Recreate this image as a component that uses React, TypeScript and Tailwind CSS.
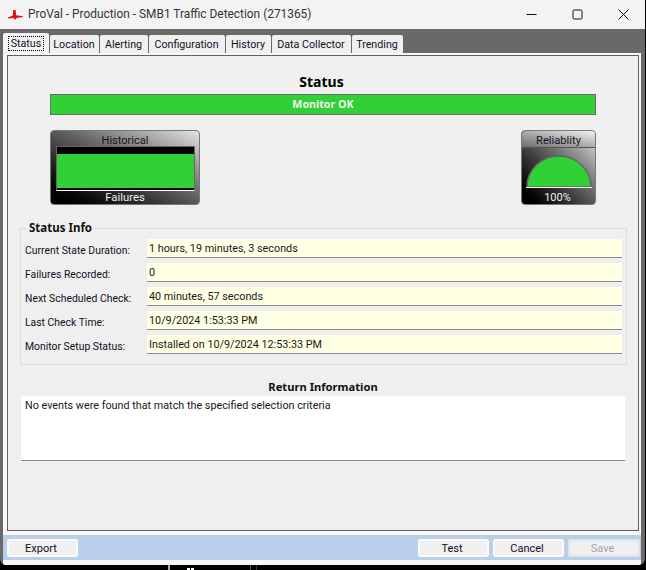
import React from 'react';

const tabs = [
  { label: 'Location', width: 'w-[49px]' },
  { label: 'Alerting', width: 'w-[48px]' },
  { label: 'Configuration', width: 'w-[76px]' },
  { label: 'History', width: 'w-[45px]' },
  { label: 'Data Collector', width: 'w-[79px]' },
  { label: 'Trending', width: 'w-[51px]' },
];

const statusRows = [
  { label: 'Current State Duration:', value: '1 hours, 19 minutes, 3 seconds' },
  { label: 'Failures Recorded:', value: '0' },
  { label: 'Next Scheduled Check:', value: '40 minutes, 57 seconds' },
  { label: 'Last Check Time:', value: '10/9/2024 1:53:33 PM' },
  { label: 'Monitor Setup Status:', value: 'Installed on 10/9/2024 12:53:33 PM' },
];

const Logo = () => (
  <svg width="15" height="10" viewBox="0 0 15 10" className="shrink-0">
    <path d="M5.2 0 L7.6 0 L8.2 5.2 L15 6.2 L15 7 L8.6 8 L7 10 L5.6 8 L0 8.4 L0 7.6 L4.8 5.4 Z" fill="#d9141c" />
  </svg>
);

const DialogButton = ({ label, disabled, width }: { label: string; disabled?: boolean; width: string }) => (
  <button
    disabled={disabled}
    className={`${width} h-[18px] pt-[1px] pr-[3px] rounded-[3px] bg-[#f0f0f0] border-2 text-[11px] leading-none ${disabled ? 'text-[#a3a3a3] border-[#dfe6ee]' : 'text-[#10101e] border-[#fbfbfb]'}`}
  >
    {label}
  </button>
);

export default function App() {
  return (
    <div className="w-[646px] h-[570px] bg-black overflow-hidden font-['Roboto',sans-serif] text-[#10101e]">
      <div className="w-[645px] h-[565px] bg-[#696969] rounded-b-[6px] flex flex-col">
        {/* title bar */}
        <div className="h-[29px] bg-[#f3f3f3] flex items-center pl-[8px]">
          <Logo />
          <span className="ml-[5px] text-[11.9px] text-[#333]">ProVal - Production - SMB1 Traffic Detection (271365)</span>
          <div className="ml-auto flex items-center gap-[35px] pr-[16px]">
            <svg width="11" height="11" viewBox="0 0 11 11"><path d="M0.5 5.5 H10.5" stroke="#111" strokeWidth="1" /></svg>
            <svg width="11" height="11" viewBox="0 0 11 11"><rect x="1" y="1" width="9" height="9" rx="1.2" fill="none" stroke="#111" strokeWidth="1" /></svg>
            <svg width="11" height="11" viewBox="0 0 11 11"><path d="M0.5 0.5 L10.5 10.5 M10.5 0.5 L0.5 10.5" stroke="#111" strokeWidth="1" /></svg>
          </div>
        </div>

        {/* tabs */}
        <div className="h-[24px] pl-[3px] flex items-end text-[10.7px]">
          <div className="w-[46px] h-[20px] bg-[#f4f4f4] rounded-t-[2px] flex items-center justify-center">
            <span className="border border-dotted border-black h-[15px] px-[2px] leading-[13px]">Status</span>
          </div>
          <div className="flex ml-[1px] gap-[1px]">
            {tabs.map((tab) => (
              <div key={tab.label} className={`${tab.width} h-[18px] pt-[2px] pr-[1px] bg-[#f0f0f0] rounded-t-[2px] flex items-center justify-center leading-none`}>
                {tab.label}
              </div>
            ))}
          </div>
        </div>

        {/* body */}
        <div className="flex-1 mx-[3px] bg-[#f8f8f8] rounded-b-[2px] flex flex-col min-h-0 w-[638px]">
          <div className="h-[476px] mt-[2px] ml-[4px] mr-[2px] border border-[#5f5f5f] bg-[#efefef] flex flex-col">
            <h1 className="mt-[17px] h-[17px] pr-[3px] text-center font-['Noto_Sans',sans-serif] text-[14px] leading-[17px] font-bold text-black">Status</h1>
            <div className="mt-[4px] mx-[42px] h-[21px] bg-[#2fd135] border border-[#6b6b6b] flex items-center justify-center font-['Noto_Sans',sans-serif] text-[10.7px] font-bold text-[#f2f2f2]">
              Monitor OK
            </div>

            <div className="mt-[15px] mx-[42px] h-[75px] flex justify-between">
              <div className="w-[150px] h-[75px] rounded-[4px] border border-[#777] bg-linear-to-bl from-[#e4e4e4] to-black flex flex-col items-center">
                <div className="h-[15px] text-[11px] leading-[19px] text-[#14141e]">Historical</div>
                <div className="w-[139px] h-[45px] border border-[#666] border-b-[#fff] bg-black pt-[7px] pb-[2px]">
                  <div className="h-full bg-[#2fd135]" />
                </div>
                <div className="h-[13px] text-[11.3px] leading-[13px] text-[#f0f0f0]">Failures</div>
              </div>
              <div className="w-[75px] h-[75px] rounded-[4px] border border-[#777] bg-linear-to-bl from-[#e4e4e4] to-black flex flex-col items-center">
                <div className="w-full h-[17px] border-b border-[#555] text-[11.2px] leading-[19px] text-center text-[#14141e] rounded-t-[4px] bg-linear-to-bl from-[#f2f2f2] to-[#6c6c6c]">Reliablity</div>
                <svg width="66" height="33" viewBox="0 0 66 33" className="mt-[7px] shrink-0">
                  <path d="M1 32 A32 31 0 0 1 65 32 Z" fill="#2fd135" stroke="#666" strokeWidth="1.5" />
                  <path d="M0 32.5 H66" stroke="#fff" strokeWidth="1" />
                </svg>
                <div className="mt-[3px] pr-[2px] h-[13px] text-[11px] leading-[13px] text-[#f0f0f0]">100%</div>
              </div>
            </div>

            {/* status info */}
            <div className="relative mt-[23px] ml-[12px] w-[607px] h-[137px] border border-[#dcdcdc] pt-[10px] pl-[4px] flex flex-col gap-[5px]">
              <span className="absolute left-[6px] -top-[9px] px-[2px] bg-[#efefef] font-['Noto_Sans',sans-serif] text-[11.5px] leading-[15px] font-bold text-[#111]">Status Info</span>
              {statusRows.map((row) => (
                <div key={row.label} className="flex h-[19px]">
                  <div className="w-[122px] pt-[5px] text-[10.4px] leading-[14px] whitespace-nowrap">{row.label}</div>
                  <div className="w-[475px] bg-[#ffffe4] border-b border-[#8a8a8a] pl-[2px] text-[10.8px] leading-[19px] whitespace-nowrap text-[#181818]">{row.value}</div>
                </div>
              ))}
            </div>

            {/* return info */}
            <div className="mt-[14px] h-[16px] text-center font-['Noto_Sans',sans-serif] text-[11.2px] leading-[16px] font-bold text-[#111]">Return Information</div>
            <div className="mt-[1px] ml-[13px] w-[604px] h-[65px] bg-white border-b border-[#8a8a8a] pl-[4px] pt-[2px] text-[10.8px] leading-[15px] text-[#181818]">
              No events were found that match the specified selection criteria
            </div>
          </div>

          <div className="mt-[4px] h-[25px] bg-[#b9cfe9] flex items-center pl-[4px] pr-[1px]">
            <DialogButton label="Export" width="w-[71px]" />
            <div className="ml-auto flex gap-[4px]">
              <DialogButton label="Test" width="w-[71px]" />
              <DialogButton label="Cancel" width="w-[71px]" />
              <DialogButton label="Save" width="w-[72px]" disabled />
            </div>
          </div>
        </div>
      </div>
      {/* bit of desktop showing under the window */}
      <div className="h-[5px] flex pl-[168px]">
        <div className="w-[2px] h-full bg-[#a8a8a8]" />
        <div className="ml-[17px] mt-[3px] w-[7px] h-[2px] flex justify-between">
          <div className="w-[3px] bg-white" />
          <div className="w-[3px] bg-white" />
        </div>
        <div className="ml-[56px] w-[1px] h-full bg-[#5a5040]" />
        <div className="ml-[5px] w-[1px] h-full bg-[#33384a]" />
      </div>
    </div>
  );
}
